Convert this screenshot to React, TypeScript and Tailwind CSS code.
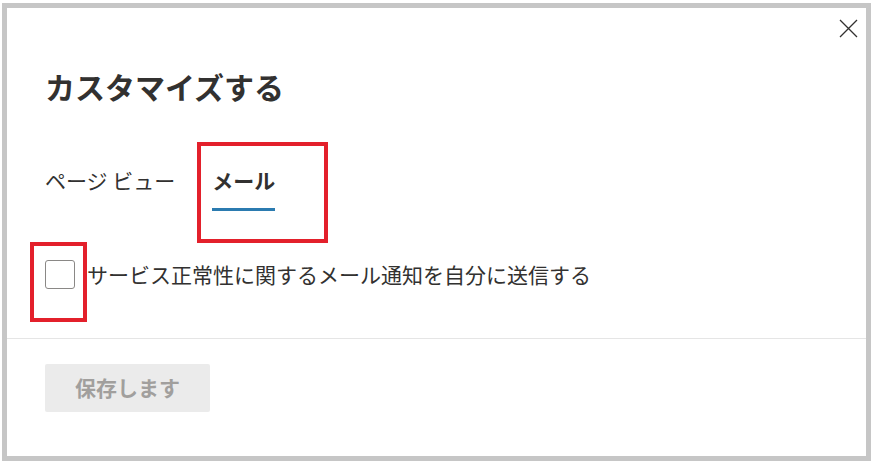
import React from "react";

const jp = { fontFamily: '"Noto Sans CJK JP", "Noto Sans", sans-serif' };

const RedMark: React.FC<{ className: string }> = ({ className }) => (
  <div className={`pointer-events-none absolute border-4 border-[#e3202b] ${className}`} />
);

export default function App() {
  return (
    <div className="w-[881px] h-[475px] bg-white pt-[3px] pl-[2px]" style={jp}>
      <div className="w-[869px] h-[458px] border-[5px] border-[#c6c6c6] bg-white flex flex-col text-[#323130]">
        <div className="flex justify-end pt-[11px] pr-[8px]">
          <button className="w-[19px] h-[19px] text-[#323130]" aria-label="閉じる">
            <svg viewBox="0 0 19 19" className="w-[19px] h-[19px]" fill="none" stroke="currentColor" strokeWidth="1.3">
              <path d="M1 1 L18 18 M18 1 L1 18" />
            </svg>
          </button>
        </div>

        <h1 className="mt-[30px] pl-[38px] text-[30px] leading-[36px] font-bold">カスタマイズする</h1>

        <div className="mt-[62px] pl-[38px] flex gap-[37px]">
          <div className="flex flex-col">
            <span className="text-[21px] leading-[28px]">ページ ビュー</span>
          </div>
          <div className="relative flex flex-col">
            <span className="text-[21px] leading-[28px] font-bold">メール</span>
            <div className="mt-[14px] h-[3px] bg-[#2b7bb0]" />
            <RedMark className="-left-[15px] -top-[24px] w-[131px] h-[101px]" />
          </div>
        </div>

        <div className="mt-[49px] pl-[38px] flex items-center gap-[12px]">
          <div className="relative">
            <div className="w-[30px] h-[29px] rounded-[3px] border border-[#8a8886] bg-white" />
            <RedMark className="-left-[15px] -top-[18px] w-[57px] h-[80px]" />
          </div>
          <span className="text-[21px] leading-[29px]">サービス正常性に関するメール通知を自分に送信する</span>
        </div>

        <div className="mt-[49px] h-px bg-[#e5e5e5]" />

        <div className="mt-[25px] pl-[38px]">
          <button className="w-[165px] h-[48px] rounded-[2px] bg-[#ebebeb] text-[#a19f9d] text-[21px] font-bold">
            保存します
          </button>
        </div>
      </div>
    </div>
  );
}
